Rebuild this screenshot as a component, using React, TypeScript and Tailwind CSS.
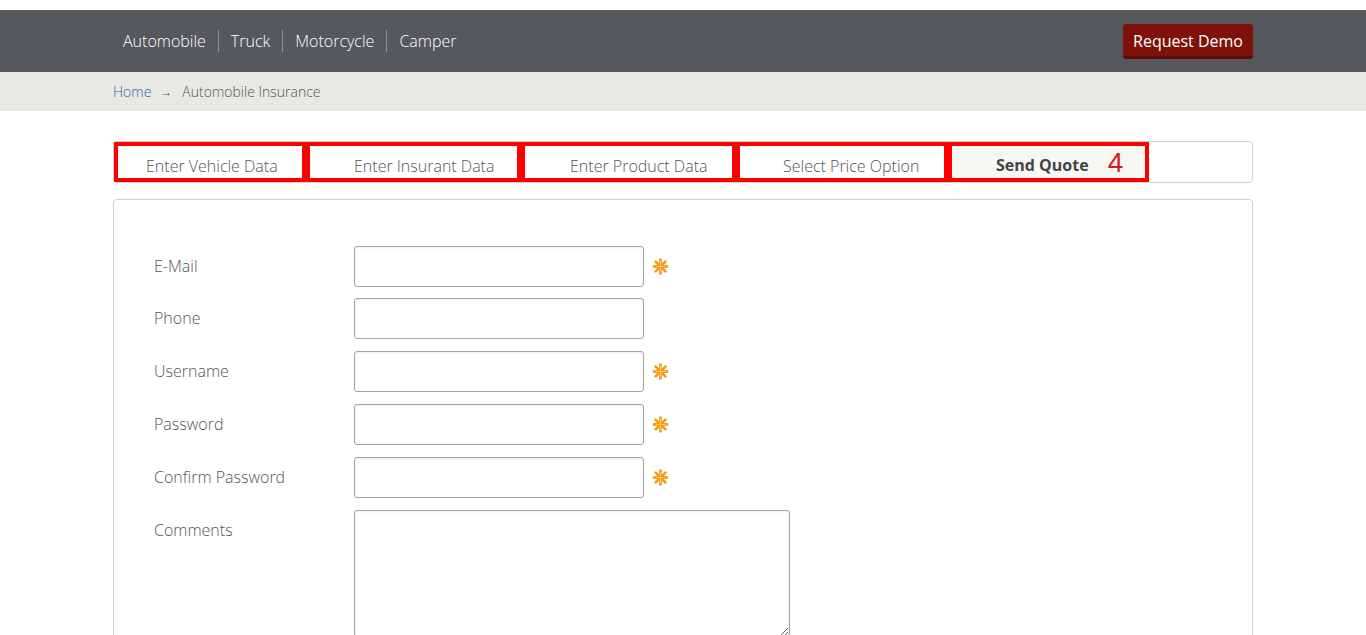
import React from 'react';

const NAV = ['Automobile', 'Truck', 'Motorcycle', 'Camper'];

const TABS = [
  { label: 'Enter Vehicle Data', w: 'w-[192px]', pl: 'pl-[28px]' },
  { label: 'Enter Insurant Data', w: 'w-[215px]', pl: 'pl-[44px]' },
  { label: 'Enter Product Data', w: 'w-[215px]', pl: 'pl-[45px]' },
  { label: 'Select Price Option', w: 'w-[212px]', pl: 'pl-[43px]' },
];

const FIELDS = [
  { label: 'E-Mail', required: true },
  { label: 'Phone', required: false },
  { label: 'Username', required: true },
  { label: 'Password', required: true },
  { label: 'Confirm Password', required: true },
];

function Required() {
  return (
    <svg width="17" height="17" viewBox="0 0 16 16" className="ml-[8px] shrink-0">
      <g stroke="#f59a1b" strokeWidth="2.6" strokeLinecap="round">
        <line x1="8" y1="1.5" x2="8" y2="14.5" />
        <line x1="2" y1="8" x2="14" y2="8" />
        <line x1="3.4" y1="3.4" x2="12.6" y2="12.6" />
        <line x1="12.6" y1="3.4" x2="3.4" y2="12.6" />
      </g>
      <g stroke="#fcc865" strokeWidth="1" strokeLinecap="round">
        <line x1="8" y1="3" x2="8" y2="13" />
        <line x1="3.5" y1="8" x2="12.5" y2="8" />
      </g>
    </svg>
  );
}

export default function App() {
  return (
    <div className="min-h-screen bg-white pt-[10px] font-['Open_Sans',sans-serif] text-[#555]">
      <header className="bg-[#55585d]">
        <div className="mx-auto flex h-[62px] w-[1140px] items-center justify-between">
          <nav className="-ml-[2px] flex items-center">
            {NAV.map((item, i) => (
              <span
                key={item}
                className={`px-[12px] text-[16px] font-light leading-[22px] text-white ${i > 0 ? 'border-l border-[#8e9094]' : ''}`}
              >
                {item}
              </span>
            ))}
          </nav>
          <button className="mt-[1px] h-[35px] w-[130px] rounded-[3px] border-b-[3px] border-[#5c0b06] bg-[#7e120b] pt-[1px] text-[16px] text-white">
            Request Demo
          </button>
        </div>
      </header>

      <div className="bg-[#e8e8e4]">
        <div className="mx-auto flex h-[39px] w-[1140px] items-center text-[14px] font-light">
          <a className="text-[#2767b0]">Home</a>
          <span className="ml-[9px] mr-[10px] text-[12px] text-[#555]">→</span>
          <span className="text-[#555]">Automobile Insurance</span>
        </div>
      </div>

      <main className="mx-auto w-[1140px] pt-[30px]">
        <div className="flex h-[42px] rounded-[4px] border border-[#cfcfcf]">
          {TABS.map((t) => (
            <div
              key={t.label}
              className={`h-[40px] ${t.w} ${t.pl} border-[4px] border-[#ff0000] pt-[9px] text-[16px] font-light leading-[22px] text-[#555]`}
            >
              {t.label}
            </div>
          ))}
          <div className="flex h-[40px] w-[201px] items-center border-[4px] border-[#ff0000] bg-[#f6f6f3] pl-[44px] pt-[6px]">
            <span className="text-[16px] font-bold leading-[22px] text-[#444]">Send Quote</span>
            <span className="ml-[19px] -mt-[5px] font-['Liberation_Sans',sans-serif] text-[28px] leading-none text-[#d41c1c]">
              4
            </span>
          </div>
        </div>

        <section className="mt-[16px] rounded-t-[4px] border border-[#cfcfcf] px-[40px] pt-[46px] pb-[20px]">
          <div className="flex flex-col gap-[12px]">
            {FIELDS.map((f, i) => (
              <div key={f.label} className={`flex items-center ${i === 1 ? '-mt-[1px]' : ''}`}>
                <label className={`w-[200px] text-[16px] font-light text-[#555] ${i === 0 ? '-mt-[2px]' : '-mt-[1px]'}`}>
                  {f.label}
                </label>
                <input
                  type="text"
                  className="h-[41px] w-[290px] rounded-[3px] border border-[#a3a3a3] bg-white shadow-[inset_0_1px_2px_rgba(0,0,0,0.08)] outline-none"
                />
                {f.required && <Required />}
              </div>
            ))}
            <div className="flex items-start">
              <label className="w-[200px] pt-[8px] text-[16px] font-light text-[#555]">Comments</label>
              <textarea className="h-[127px] w-[436px] rounded-[3px] border border-[#a3a3a3] bg-white shadow-[inset_0_1px_2px_rgba(0,0,0,0.08)] outline-none" />
            </div>
          </div>
        </section>
      </main>
    </div>
  );
}
